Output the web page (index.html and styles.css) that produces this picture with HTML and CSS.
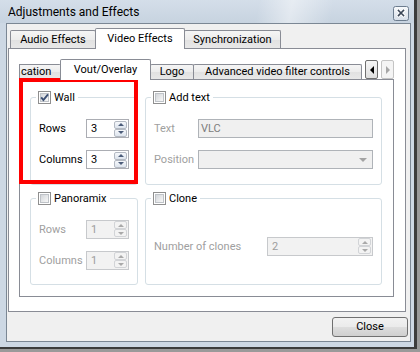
FILE: index.html
```html
<!DOCTYPE html>
<html>
<head>
<meta charset="utf-8">
<title>Adjustments and Effects</title>
<link rel="stylesheet" href="styles.css">
</head>
<body>
<div class="window">
  <div class="titlebar">
    <span class="title">Adjustments and Effects</span>
    <span class="tb-close">
      <svg width="16" height="15" viewBox="0 0 16 15">
        <defs><linearGradient id="cg" x1="0" y1="0" x2="0" y2="1"><stop offset="0" stop-color="#f8fafc"/><stop offset="1" stop-color="#d6dee8"/></linearGradient></defs>
        <rect x="0.5" y="0.5" width="15" height="14" rx="2" fill="url(#cg)" stroke="#6d7d8f"/>
        <path d="M5.5 4.5l5 5M10.5 4.5l-5 5" stroke="#ffffff" stroke-width="3.2" stroke-linecap="square"/>
        <path d="M5.5 4.5l5 5M10.5 4.5l-5 5" stroke="#3a4657" stroke-width="1.6" stroke-linecap="square"/>
      </svg>
    </span>
  </div>
  <div class="client">
    <div class="outer-tabs">
      <div class="tabbar outer-bar">
        <div class="tab t-audio">Audio Effects</div>
        <div class="tab t-video active">Video Effects</div>
        <div class="tab t-sync">Synchronization</div>
      </div>
      <div class="outer-pane">
        <div class="tabbar inner-bar">
          <div class="tab t-cation">cation</div>
          <div class="tab t-vout active">Vout/Overlay</div>
          <div class="tab t-logo">Logo</div>
          <div class="tab t-adv">Advanced video filter controls</div>
          <div class="scroll-btns">
            <span class="sbtn"><span class="tri-left"></span></span>
            <span class="sbtn disabled"><span class="tri-right"></span></span>
          </div>
        </div>
        <div class="inner-pane">
          <fieldset class="group">
            <legend><span class="lg"><span class="cb checked"><svg class="check" width="13" height="13" viewBox="0 0 13 13"><path d="M3.2 6.4L5.4 9.1L10 3.4" fill="none" stroke="#3b4f73" stroke-width="1.9"/></svg></span><span>Wall</span></span></legend>
            <div class="form form-small">
              <span class="lbl">Rows</span>
              <span class="spin"><span class="val">3</span><span class="spin-btns"><span class="sb"><span class="up"></span></span><span class="sb"><span class="down"></span></span></span></span>
              <span class="lbl">Columns</span>
              <span class="spin"><span class="val">3</span><span class="spin-btns"><span class="sb"><span class="up"></span></span><span class="sb"><span class="down"></span></span></span></span>
            </div>
          </fieldset>
          <fieldset class="group">
            <legend><span class="lg"><span class="cb"></span><span>Add text</span></span></legend>
            <div class="form form-text">
              <span class="lbl dis">Text</span>
              <span class="field">VLC</span>
              <span class="lbl dis">Position</span>
              <span class="combo"><span class="combo-arrow"></span></span>
            </div>
          </fieldset>
          <fieldset class="group">
            <legend><span class="lg"><span class="cb"></span><span>Panoramix</span></span></legend>
            <div class="form form-small">
              <span class="lbl dis">Rows</span>
              <span class="spin disabled"><span class="val">1</span><span class="spin-btns"><span class="sb"><span class="up"></span></span><span class="sb"><span class="down"></span></span></span></span>
              <span class="lbl dis">Columns</span>
              <span class="spin disabled"><span class="val">1</span><span class="spin-btns"><span class="sb"><span class="up"></span></span><span class="sb"><span class="down"></span></span></span></span>
            </div>
          </fieldset>
          <fieldset class="group">
            <legend><span class="lg"><span class="cb"></span><span>Clone</span></span></legend>
            <div class="form form-clone">
              <span class="lbl dis">Number of clones</span>
              <span class="spin disabled"><span class="val">2</span><span class="spin-btns"><span class="sb"><span class="up"></span></span><span class="sb"><span class="down"></span></span></span></span>
            </div>
          </fieldset>
        </div>
      </div>
    </div>
    <div class="btn-row">
      <span class="btn">Close</span>
    </div>
  </div>
</div>
<div class="highlight"></div>
</body>
</html>
```

FILE: styles.css
```css
*, *::before, *::after { box-sizing: border-box; }

html, body { margin: 0; padding: 0; }

body {
  width: 420px;
  height: 352px;
  overflow: hidden;
  position: relative;
  background: #9a9a9a;
  font-family: Roboto, "Segoe UI", "Liberation Sans", sans-serif;
  font-size: 11px;
  color: #000;
}

.window {
  width: 417px;
  height: 349px;
  background: #cdd8e4;
  border-right: 3px solid #3c3c3c;
  border-bottom: 2px solid #3c3c3c;
  display: flex;
  flex-direction: column;
}

.titlebar {
  height: 23px;
  flex: none;
  display: flex;
  justify-content: space-between;
  align-items: flex-start;
  padding: 0 5px 0 8px;
  background:
    linear-gradient(100deg, rgba(255,255,255,0) 62%, rgba(255,255,255,0.45) 70%, rgba(255,255,255,0) 80%),
    linear-gradient(#d4dee9, #c7d3e0);
}

.title {
  font-size: 12px;
  line-height: 21px;
  padding-top: 2px;
}

.tb-close {
  margin-top: 6px;
  width: 16px;
  height: 15px;
  display: block;
}
.tb-close svg { display: block; }

.client {
  margin-left: 6px;
  width: 405px;
  height: 319px;
  border: 1px solid #7b8794;
  background: #f0f0f0;
  padding: 4px 2px 4px 1px;
  display: flex;
  flex-direction: column;
}

.outer-tabs {
  display: flex;
  flex-direction: column;
  margin-right: 2px;
}

/* tabs */
.tabbar {
  display: flex;
  align-items: flex-end;
  height: 20px;
  flex: none;
}
.outer-bar { padding-left: 2px; }

.tab {
  border: 1px solid #898c95;
  border-bottom: none;
  background: linear-gradient(#f5f5f5, #ececec 50%, #e1e1e1 51%, #e8e8e8);
  text-align: center;
  white-space: nowrap;
  overflow: hidden;
  border-radius: 2px 2px 0 0;
}
.tab + .tab { margin-left: -1px; }

.outer-bar .tab {
  height: 18px;
  line-height: 16px;
  padding-top: 1px;
}
.outer-bar .tab.active {
  height: 21px;
  margin-bottom: -1px;
  padding-top: 2px;
  background: #fff;
  position: relative;
  z-index: 2;
}

.t-audio { width: 86px; }
.t-video { width: 90px; }
.t-sync { width: 97px; }

.inner-bar .tab {
  height: 15px;
  line-height: 13px;
}
.inner-bar .tab.active {
  height: 21px;
  margin-bottom: -1px;
  padding-top: 3px;
  line-height: 14px;
  background: #fff;
  position: relative;
  z-index: 2;
}

.t-cation { width: 42px; text-align: left; padding-left: 1px; border-radius: 0 2px 0 0; }
.t-vout { width: 91px; }
.t-logo { width: 44px; }
.t-adv { width: 169px; }

.scroll-btns {
  margin-left: auto;
  display: flex;
  gap: 3px;
  align-self: flex-end;
}
.sbtn {
  width: 13px;
  height: 19px;
  border: 1px solid #6f6f6f;
  border-radius: 2px;
  background: linear-gradient(#f6f6f6, #dedede);
  display: flex;
  align-items: center;
  justify-content: center;
}
.sbtn.disabled {
  border-color: #c4c4c4;
  background: #f4f4f4;
}
.tri-left {
  width: 0; height: 0;
  border-top: 4px solid transparent;
  border-bottom: 4px solid transparent;
  border-right: 4px solid #000;
}
.tri-right {
  width: 0; height: 0;
  border-top: 4px solid transparent;
  border-bottom: 4px solid transparent;
  border-left: 4px solid #a6a6a6;
}

/* panes */
.outer-pane {
  height: 264px;
  border: 1px solid #898c95;
  background: #fff;
  padding: 10px 11px 14px 10px;
  display: flex;
  flex-direction: column;
}

.inner-pane {
  flex: 1;
  border: 1px solid #898c95;
  background: #fff;
  padding: 11px 11px 11px 10px;
  display: grid;
  grid-template-columns: 108px 1fr;
  grid-template-rows: 1fr 1fr;
  gap: 7px;
}

/* group boxes */
.group {
  margin: 0;
  min-width: 0;
  border: 1px solid #d5dfe5;
  border-radius: 3px;
  padding: 15px 9px 0 8px;
}
.group legend {
  padding: 0 3px 0 2px;
  margin-left: -3px;
}
.lg {
  display: flex;
  align-items: center;
  gap: 3px;
  height: 13px;
  line-height: 13px;
}

.cb {
  width: 13px;
  height: 13px;
  border: 1px solid #8f8f8f;
  background: #fff;
  padding: 1px;
  position: relative;
  flex: none;
}
.cb::before {
  content: "";
  display: block;
  width: 9px;
  height: 9px;
  border: 1px solid #bfc3c8;
  background: linear-gradient(135deg, #d3d6da, #f8f8f8);
}
.check {
  position: absolute;
  left: -1px;
  top: -1px;
}

/* forms */
.form {
  display: grid;
  row-gap: 12px;
  align-items: center;
}
.form-small { grid-template-columns: 47px 43px; }
.form-text { grid-template-columns: 44px 175px; }
.form-clone { grid-template-columns: 113px 106px; padding-top: 17px; }

.lbl { white-space: nowrap; line-height: 13px; }
.lbl.dis { color: #a0a0a0; }

.spin {
  height: 19px;
  border: 1px solid #abadb3;
  background: #fff;
  display: flex;
  align-items: center;
  justify-content: space-between;
  padding-left: 4px;
  padding-right: 1px;
}
.spin .val { line-height: 13px; }
.spin-btns {
  display: flex;
  flex-direction: column;
  width: 13px;
  height: 16px;
}
.sb {
  flex: 1;
  border: 1px solid #b3b9c2;
  border-radius: 2px;
  background: linear-gradient(#f6f8fb, #dde4ed);
  display: flex;
  align-items: center;
  justify-content: center;
}
.up {
  width: 0; height: 0;
  border-left: 3px solid transparent;
  border-right: 3px solid transparent;
  border-bottom: 3px solid #4c5d7a;
}
.down {
  width: 0; height: 0;
  border-left: 3px solid transparent;
  border-right: 3px solid transparent;
  border-top: 3px solid #4c5d7a;
}
.spin.disabled {
  border-color: #c7c9cc;
  background: #f2f2f2;
  color: #9d9d9d;
}
.spin.disabled .sb {
  border-color: #d2d4d7;
  background: #f3f3f3;
}
.spin.disabled .up { border-bottom-color: #a9a9a9; }
.spin.disabled .down { border-top-color: #a9a9a9; }

.field {
  height: 19px;
  border: 1px solid #afb3b8;
  background: #f0f0f0;
  color: #7d7d7d;
  padding-left: 2px;
  line-height: 17px;
}
.combo {
  height: 19px;
  border: 1px solid #afb3b8;
  background: #f0f0f0;
  display: flex;
  justify-content: flex-end;
  align-items: center;
  padding-right: 5px;
}
.combo-arrow {
  width: 0; height: 0;
  border-left: 4px solid transparent;
  border-right: 4px solid transparent;
  border-top: 4px solid #a3a3a3;
}

/* bottom button */
.btn-row {
  display: flex;
  justify-content: flex-end;
  margin-top: 5px;
}
.btn {
  width: 76px;
  height: 20px;
  border: 1px solid #707070;
  border-radius: 3px;
  background: linear-gradient(#f2f2f2 0%, #ebebeb 48%, #dddddd 52%, #cfcfcf 100%);
  text-align: center;
  line-height: 18px;
}

/* annotation overlay */
.highlight {
  position: absolute;
  left: 19px;
  top: 78px;
  width: 119px;
  height: 106px;
  border: 4px solid #ff0000;
}
```
